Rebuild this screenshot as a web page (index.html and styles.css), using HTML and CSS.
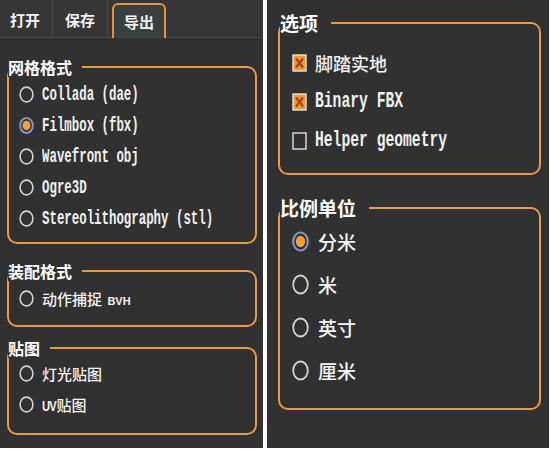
FILE: index.html
```html
<!DOCTYPE html>
<html lang="zh">
<head>
<meta charset="utf-8">
<title>导出</title>
<link rel="stylesheet" href="styles.css">
</head>
<body>
<div class="screen">
  <section class="panel left">
    <nav class="tabs">
      <span class="tab first">打开</span><span class="sep"></span><span class="tab">保存</span><span class="sep"></span><span class="tab active">导出</span>
    </nav>
    <fieldset class="group g1">
      <legend>网格格式</legend>
      <ul class="opts">
        <li class="opt"><svg class="radio" viewBox="0 0 15 17"><ellipse cx="7.5" cy="8.5" rx="6.4" ry="7.4" fill="none" stroke="#d2d2d2" stroke-width="1.6"/></svg><span class="mono">Collada (dae)</span></li>
        <li class="opt"><svg class="radio" viewBox="0 0 15 17"><ellipse cx="7.5" cy="8.5" rx="6.4" ry="7.4" fill="#2b2e36" stroke="#8496bb" stroke-width="2"/><ellipse cx="7.5" cy="8.5" rx="4" ry="4.7" fill="#f6a034"/></svg><span class="mono">Filmbox (fbx)</span></li>
        <li class="opt"><svg class="radio" viewBox="0 0 15 17"><ellipse cx="7.5" cy="8.5" rx="6.4" ry="7.4" fill="none" stroke="#d2d2d2" stroke-width="1.6"/></svg><span class="mono">Wavefront obj</span></li>
        <li class="opt"><svg class="radio" viewBox="0 0 15 17"><ellipse cx="7.5" cy="8.5" rx="6.4" ry="7.4" fill="none" stroke="#d2d2d2" stroke-width="1.6"/></svg><span class="mono">Ogre3D</span></li>
        <li class="opt"><svg class="radio" viewBox="0 0 15 17"><ellipse cx="7.5" cy="8.5" rx="6.4" ry="7.4" fill="none" stroke="#d2d2d2" stroke-width="1.6"/></svg><span class="mono">Stereolithography (stl)</span></li>
      </ul>
    </fieldset>
    <fieldset class="group g2">
      <legend>装配格式</legend>
      <ul class="opts">
        <li class="opt"><svg class="radio" viewBox="0 0 15 17"><ellipse cx="7.5" cy="8.5" rx="6.4" ry="7.4" fill="none" stroke="#d2d2d2" stroke-width="1.6"/></svg><span class="cjk">动作捕捉 <span class="small">BVH</span></span></li>
      </ul>
    </fieldset>
    <fieldset class="group g3">
      <legend>贴图</legend>
      <ul class="opts">
        <li class="opt"><svg class="radio" viewBox="0 0 15 17"><ellipse cx="7.5" cy="8.5" rx="6.4" ry="7.4" fill="none" stroke="#d2d2d2" stroke-width="1.6"/></svg><span class="cjk">灯光贴图</span></li>
        <li class="opt"><svg class="radio" viewBox="0 0 15 17"><ellipse cx="7.5" cy="8.5" rx="6.4" ry="7.4" fill="none" stroke="#d2d2d2" stroke-width="1.6"/></svg><span class="cjk"><span class="uv">UV</span>贴图</span></li>
      </ul>
    </fieldset>
  </section>
  <div class="divider"></div>
  <section class="panel right">
    <fieldset class="group big ga">
      <legend>选项</legend>
      <ul class="opts">
        <li class="opt"><svg class="check" viewBox="0 0 15 18"><rect x="1" y="1" width="13" height="16" fill="#f39a2c" stroke="#dfe6ee" stroke-width="1.4"/><path d="M4 4.5 L11 13.5 M11 4.5 L4 13.5" stroke="#a8401c" stroke-width="2.2"/></svg><span class="cjk">脚踏实地</span></li>
        <li class="opt"><svg class="check" viewBox="0 0 15 18"><rect x="1" y="1" width="13" height="16" fill="#f39a2c" stroke="#dfe6ee" stroke-width="1.4"/><path d="M4 4.5 L11 13.5 M11 4.5 L4 13.5" stroke="#a8401c" stroke-width="2.2"/></svg><span class="mono">Binary FBX</span></li>
        <li class="opt"><svg class="check" viewBox="0 0 15 18"><rect x="1" y="1" width="13" height="16" fill="none" stroke="#e2e2e2" stroke-width="1.4"/></svg><span class="mono">Helper geometry</span></li>
      </ul>
    </fieldset>
    <fieldset class="group big gb">
      <legend>比例单位</legend>
      <ul class="opts">
        <li class="opt"><svg class="radio" viewBox="0 0 17 21"><ellipse cx="8.5" cy="10.5" rx="7.3" ry="9" fill="#2b2e36" stroke="#8496bb" stroke-width="2.2"/><ellipse cx="8.5" cy="10.5" rx="4.6" ry="5.8" fill="#f6a034"/></svg><span class="cjk">分米</span></li>
        <li class="opt"><svg class="radio" viewBox="0 0 17 21"><ellipse cx="8.5" cy="10.5" rx="7.3" ry="9" fill="none" stroke="#d2d2d2" stroke-width="1.8"/></svg><span class="cjk">米</span></li>
        <li class="opt"><svg class="radio" viewBox="0 0 17 21"><ellipse cx="8.5" cy="10.5" rx="7.3" ry="9" fill="none" stroke="#d2d2d2" stroke-width="1.8"/></svg><span class="cjk">英寸</span></li>
        <li class="opt"><svg class="radio" viewBox="0 0 17 21"><ellipse cx="8.5" cy="10.5" rx="7.3" ry="9" fill="none" stroke="#d2d2d2" stroke-width="1.8"/></svg><span class="cjk">厘米</span></li>
      </ul>
    </fieldset>
  </section>
</div>
</body>
</html>
```
FILE: styles.css
```css
html, body {
  margin: 0;
  padding: 0;
  background: #ffffff;
}

.screen {
  display: flex;
  width: 551px;
  height: 450px;
  font-family: "Noto Sans CJK SC", "Liberation Sans", sans-serif;
  color: #f4f4f4;
}

.panel {
  background: #313131;
  height: 448px;
  display: flex;
  flex-direction: column;
}

.left { width: 263px; }
.divider { width: 4px; background: #ffffff; }
.right { width: 282px; }

/* Tabs */
.tabs {
  display: flex;
  align-items: stretch;
  height: 37px;
  background: #363636;
  border-bottom: 1px solid #474747;
  font-size: 15px;
  font-weight: 700;
  line-height: 1;
}

.tab {
  display: flex;
  align-items: center;
  padding: 2px 12px 0;
  color: #f2f2f2;
}

.tab.first { padding-left: 10px; }

.sep {
  width: 1px;
  background: #4c4c4c;
}

.tab.active {
  margin: 3px 0 -1px 4px;
  padding: 0 10px;
  border: 2px solid #e49440;
  border-bottom: none;
  border-radius: 6px 6px 0 0;
  background: #394040;
}

/* Group boxes */
.group {
  min-width: 0;
  margin: 0 6px 0 7px;
  padding: 0;
  border: 2px solid #e69b45;
  border-radius: 10px;
}

.group legend {
  margin-left: -1px;
  padding: 0 10px 0 0;
  font-size: 16px;
  font-weight: 700;
  line-height: 20px;
  color: #ffffff;
}

.g1 { margin-top: 19px; padding: 2px 0 8px; }
.g2 { margin-top: 17px; padding: 2px 0 11px; }
.g3 { margin-top: 11px; padding: 0 0 13px; }

.opts {
  list-style: none;
  margin: 0;
  padding: 0 0 0 10px;
}

.opt {
  display: flex;
  align-items: center;
  gap: 8px;
  height: 31px;
  white-space: nowrap;
}

.radio {
  width: 15px;
  height: 17px;
  flex: none;
}

.mono {
  display: inline-block;
  font-family: "Liberation Mono", "DejaVu Sans Mono", monospace;
  font-weight: 700;
  font-size: 20px;
  transform: scaleX(0.62);
  transform-origin: left center;
  color: #f2f2f2;
}

.cjk {
  font-size: 15px;
  font-weight: 500;
  color: #f4f4f4;
}

.small {
  font-family: "Liberation Sans", sans-serif;
  font-size: 11px;
  font-weight: 700;
  margin-left: 2px;
}

.uv {
  display: inline-block;
  font-family: "Liberation Sans", sans-serif;
  font-size: 14px;
  font-weight: 700;
  letter-spacing: -1px;
  transform: scaleX(0.8);
  transform-origin: left center;
  margin-right: -3px;
}

/* Right panel groups */
.big {
  margin: 0 8px 0 11px;
}

.big legend {
  margin-left: 0;
  font-size: 19px;
  line-height: 24px;
  padding-right: 13px;
}

.big .opts { padding-left: 12px; }

.ga { margin-top: 11px; padding: 8px 0 13px; }
.ga .opt { height: 39px; }

.gb { margin-top: 21px; padding: 0 0 16px; }
.gb .opt { height: 43px; gap: 9px; }

.check {
  width: 15px;
  height: 18px;
  flex: none;
}

.big .radio {
  width: 17px;
  height: 21px;
}

.big .mono {
  font-size: 22px;
  transform: scaleX(0.667);
}

.big .cjk {
  font-size: 18px;
}

.gb .cjk {
  font-size: 19px;
}
```
